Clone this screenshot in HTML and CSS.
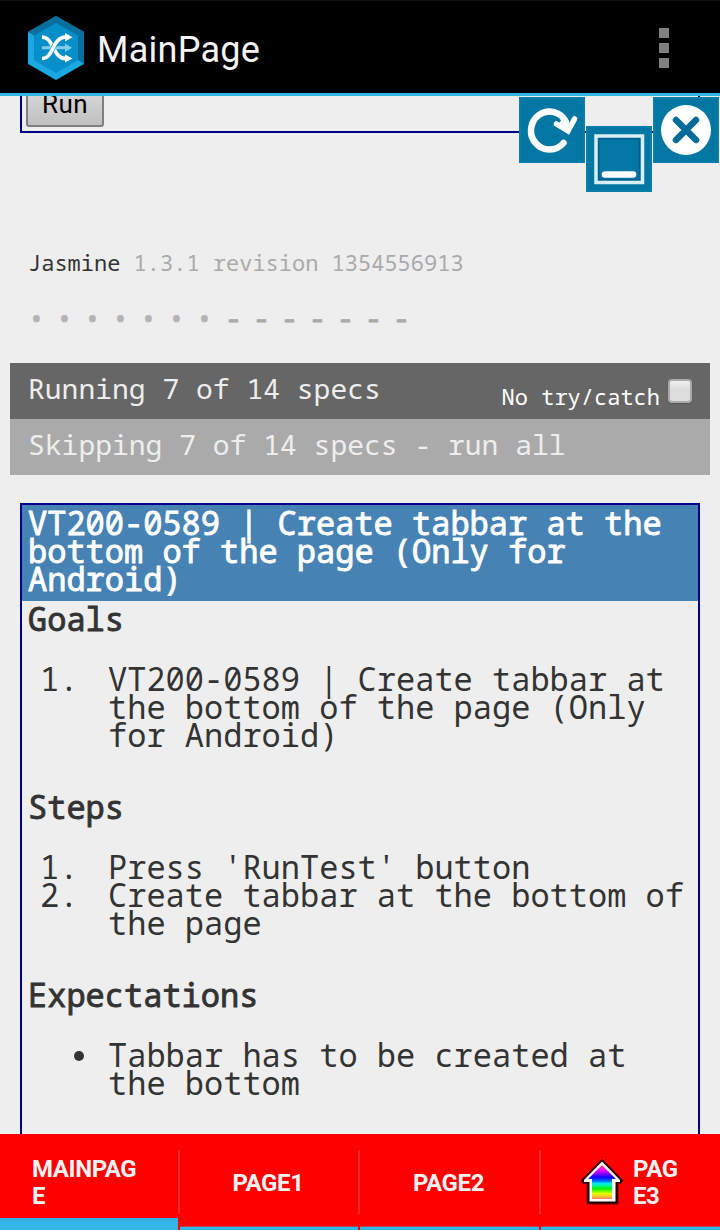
FILE: index.html
```html
<!DOCTYPE html>
<html lang="en">
<head>
<meta charset="utf-8">
<title>MainPage</title>
<link rel="stylesheet" href="styles.css">
</head>
<body>
<div class="screen">
  <header class="action-bar">
    <svg class="app-icon" width="56" height="64" viewBox="0 0 56 64">
      <path d="M28 0 56 16V48L28 64 0 48V16Z" fill="#1ba8e0"/>
      <path d="M0 16 28 0 56 16V48L49 43V20L28 8 7 20Z" fill="#06709f"/>
      <path d="M28 7 50 19.500V44L28 57 6 44V19.500Z" fill="#078fca"/>
      <path d="M14 31.700h24" stroke="#80cdeb" stroke-width="3"/>
      <path d="M37 27.500 44 31.700 37 36Z" fill="#80cdeb"/>
      <g fill="none" stroke="#fff" stroke-width="3.700">
        <path d="M14 21C26 21 24 42.500 38 42.500"/>
        <path d="M14 42.500C26 42.500 24 21 38 21" stroke="#078fca" stroke-width="5"/>
        <path d="M14 42.500C26 42.500 24 21 38 21"/>
      </g>
      <path d="M37 17 44.500 21.200 37 25.500ZM37 38.500 44.500 42.500 37 46.500Z" fill="#fff"/>
    </svg>
    <h1 class="title">MainPage</h1>
    <div class="overflow"><i></i><i></i><i></i></div>
  </header>

  <main class="page">
    <div class="run-box"><button class="run">Run</button></div>
    <div class="banner"><span class="name">Jasmine</span> 1.3.1 revision 1354556913</div>
    <ul class="symbols">
      <li class="dot">•</li><li class="dot">•</li><li class="dot">•</li><li class="dot">•</li><li class="dot">•</li><li class="dot">•</li><li class="dot">•</li>
      <li>-</li><li>-</li><li>-</li><li>-</li><li>-</li><li>-</li><li>-</li>
    </ul>
    <div class="bar running"><span>Running 7 of 14 specs</span><label class="catch">No try/catch<span class="check"></span></label></div>
    <div class="bar skipping">Skipping 7 of 14 specs - run all</div>
    <section class="spec">
      <h2 class="spec-title">VT200-0589 | Create tabbar at the bottom of the page (Only for Android)</h2>
      <h3 class="heading">Goals</h3>
      <ol class="list"><li><span class="num">1.</span><span>VT200-0589 | Create tabbar at the bottom of the page (Only for Android)</span></li></ol>
      <h3 class="heading">Steps</h3>
      <ol class="list">
        <li><span class="num">1.</span><span>Press 'RunTest' button</span></li>
        <li><span class="num">2.</span><span>Create tabbar at the bottom of the page</span></li>
      </ol>
      <h3 class="heading">Expectations</h3>
      <ul class="list"><li><span class="num"><i class="bullet"></i></span><span>Tabbar has to be created at the bottom</span></li></ul>
    </section>
  </main>

  <nav class="tabs">
    <div class="tab active"><span class="label">MAINPAG<br>E</span></div>
    <div class="tab"><span class="label">PAGE1</span></div>
    <div class="tab"><span class="label">PAGE2</span></div>
    <div class="tab last">
      <svg class="home" width="44" height="48" viewBox="0 0 44 48">
        <defs><linearGradient id="rainbow" x1="0" y1="0" x2="0" y2="1">
          <stop offset="0" stop-color="#ff5080"/><stop offset=".16" stop-color="#f000ff"/><stop offset=".36" stop-color="#1000ff"/><stop offset=".46" stop-color="#0060ff"/><stop offset=".55" stop-color="#00f0f0"/><stop offset=".7" stop-color="#00f500"/><stop offset=".85" stop-color="#f4ff00"/><stop offset="1" stop-color="#ff8060"/>
        </linearGradient></defs>
        <path d="M22 2 43 23.500 41 26.500H38V47H7V26.500H3L1 23.500Z" fill="#260000" stroke="#700000" stroke-width="1" stroke-linejoin="round"/>
        <path d="M22 4.500 40 23V25H35.500V44.500H9.500V25H4V23Z" fill="#fff"/>
        <path d="M22 8 36 22H32V42H12V22H8Z" fill="url(#rainbow)"/>
      </svg>
      <span class="label">PAG<br>E3</span>
    </div>
  </nav>

  <div class="controls">
    <svg width="66" height="66" viewBox="0 0 66 66">
      <rect width="66" height="66" fill="#0a7da8"/><rect x="2" y="2" width="62" height="62" fill="#0277a3"/>
      <path d="M44.500 46A18.500 19 0 1 1 47 25" fill="none" stroke="#fff" stroke-width="6.500" stroke-linecap="round"/>
      <path d="M37.500 27 49 34 55.500 22" fill="none" stroke="#fff" stroke-width="5.500" stroke-linecap="round" stroke-linejoin="miter"/>
      <path d="M43 22 49 24 50 36 38 29Z" fill="#fff"/>
    </svg>
    <svg class="lower" width="66" height="66" viewBox="0 0 66 66">
      <rect width="66" height="66" fill="#0a7da8"/><rect x="2" y="2" width="62" height="62" fill="#0277a3"/>
      <rect x="12.500" y="12.500" width="41" height="41" fill="none" stroke="#00608f" stroke-width="2"/>
      <rect x="10" y="10" width="46.500" height="46.500" fill="none" stroke="#d9edf4" stroke-width="3.500"/>
      <path d="M19 48.500H47" stroke="#fff" stroke-width="6.500" stroke-linecap="round"/>
    </svg>
    <svg width="66" height="66" viewBox="0 0 66 66">
      <rect width="66" height="66" fill="#0a7da8"/><rect x="2" y="2" width="62" height="62" fill="#0277a3"/>
      <circle cx="33" cy="33" r="25" fill="#fff"/>
      <path d="M23 23 43 43M43 23 23 43" stroke="#026b99" stroke-width="6.500" stroke-linecap="round"/>
    </svg>
  </div>
</div>
</body>
</html>
```
FILE: styles.css
```css
* { box-sizing: border-box; }
body { margin: 0; background: #eee; }
h1, h2, h3, ul, ol { margin: 0; padding: 0; font-weight: 400; list-style: none; }
.screen {
  position: relative;
  width: 720px;
  height: 1230px;
  display: flex;
  flex-direction: column;
  overflow: hidden;
  font-family: "Droid Sans Mono", "Noto Sans Mono", "DejaVu Sans Mono", monospace;
  color: #333;
}
.action-bar {
  flex: none;
  height: 96px;
  display: flex;
  align-items: center;
  padding: 3px 51px 0 28px;
  background: #000;
  border-top: 1px solid #111;
  border-bottom: 3px solid #33b5e5;
}
.app-icon { margin-top: -1px; }
.title { flex: 1; margin: 2px 0 0 13px; font: 400 36px/44px Roboto, sans-serif; letter-spacing: .25px; color: #f3f3f3; }
.overflow { display: grid; gap: 5px; margin-top: -1px; }
.overflow i { width: 10px; height: 10px; background: #808080; }

.page { flex: 1; min-height: 0; overflow: hidden; padding: 0 10px; }
.run-box { height: 37px; margin: 0 10px; padding-left: 4px; border: solid #00008b; border-width: 0 2px 2px; overflow: hidden; }
.run {
  display: block;
  width: 78px;
  height: 45px;
  margin-top: -14px;
  padding: 0 0 2px;
  border: 2px solid #808080;
  border-radius: 3px;
  background: linear-gradient(#ddd, #c0c0c0);
  font: 26px/38px Roboto, sans-serif;
  letter-spacing: .4px;
  color: #000;
}
.banner { margin: 115px 18px 0; font-size: 22px; line-height: 28px; color: #aaa; }
.name { color: #333; }
.symbols { display: flex; margin: 28px 0 0 18px; height: 28px; font-size: 28px; color: #aaa; }
.symbols li { width: 28px; padding-left: 1px; line-height: 26px; -webkit-text-stroke: 1px #aaa; }
.symbols .dot { padding: 0; line-height: 28px; color: #b4b4b4; -webkit-text-stroke: .6px #b4b4b4; }
.bar { height: 56px; padding: 0 18px; font-size: 28px; line-height: 50px; color: #eee; }
.running { display: flex; justify-content: space-between; margin-top: 31px; background: #666; }
.skipping { background: #aaa; }
.catch { display: flex; font-size: 22px; line-height: 67px; color: #fff; }
.check { width: 24px; height: 24px; margin: 16px 0 0 8px; border: 2px solid #aaa; border-radius: 4px; background: linear-gradient(#efefef, #dcdcdc 40%); box-shadow: 0 1px 1px #555; }

.spec { height: 800px; margin: 28px 10px 0; border: 2px solid #00008b; font-size: 32px; line-height: 28px; }
.spec-title { padding: 4px 6px 8px; font-size: 32px; color: #fff; background: #4682b4; -webkit-text-stroke: .9px #fff; }
.heading { padding: 4px 6px 0; font-size: 32px; -webkit-text-stroke: .9px #333; }
.list { margin: 32px 0 40px; }
.list li { display: grid; grid-template-columns: 86px 1fr; padding-right: 8px; }
.num { padding-left: 18px; }
.bullet { display: block; width: 10px; height: 10px; margin: 10px 0 0 34px; border-radius: 50%; background: #333; }

.tabs { flex: none; height: 96px; display: grid; grid-template-columns: 180px 180px 181px 179px; background: #f00; font: 700 24px/27px Roboto, sans-serif; letter-spacing: -.4px; color: #f3f3f3; }
.tab { position: relative; display: flex; align-items: center; justify-content: center; padding: 2px 4px 0 0; }
.tab::before { content: ""; position: absolute; right: 0; top: 16px; width: 2px; height: 64px; background: #ff2929; }
.tab::after { content: ""; position: absolute; left: 0; right: 2px; bottom: 0; height: 3px; background: #33b5e5; border-top: 1px solid #b94747; }
.active::after { height: 12px; border: 0; }
.active { justify-content: flex-start; padding-left: 32px; }
.last::before { display: none; }
.last::after { right: 0; }
.last { justify-content: flex-start; padding-left: 39px; }
.home { margin: -5px 9px 0 0; }

.controls { position: absolute; left: 519px; top: 97px; display: flex; align-items: flex-start; gap: 1px; }
.lower { margin-top: 29px; }
```
